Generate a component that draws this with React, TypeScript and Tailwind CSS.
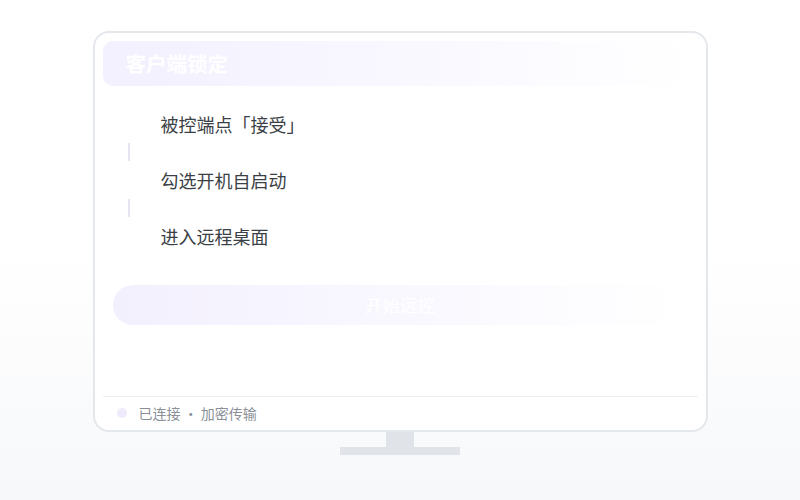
import React from 'react';

const steps = ["被控端点「接受」", "勾选开机自启动", "进入远程桌面"];

export default function App() {
  return (
    <div
      className="w-[800px] h-[500px] bg-gradient-to-b from-white from-50% to-[#f7f8fa] flex flex-col items-center pt-[31px]"
      style={{ fontFamily: '"Noto Sans CJK SC", "Noto Sans", sans-serif' }}
    >
      {/* monitor */}
      <div className="w-[615px] h-[401px] rounded-[16px] border-2 border-[#e4e7eb] bg-white flex flex-col">
        {/* header */}
        <div className="mx-[8px] mt-[8px] h-[45px] rounded-[10px] bg-gradient-to-r from-[#f3f0ff] to-white flex items-center justify-between pl-[23px] pr-[30px]">
          <span className="text-[20.5px] font-bold text-white leading-none">客户端锁定</span>
          <span className="text-[14px] text-white leading-none">已锁定</span>
        </div>

        {/* steps */}
        <div className="mt-[20px] flex flex-col">
          {steps.map((s, i) => (
            <React.Fragment key={s}>
              {i > 0 && (
                <div className="h-[20px] pl-[33px] py-[1px]">
                  <div className="w-[2px] h-full bg-[#e6e4f0]" />
                </div>
              )}
              <div className="h-[36px] flex items-center">
                <div className="w-[24px] h-[24px] ml-[22px] rounded-full bg-white" />
                <span className="ml-[20px] text-[18px] text-[#3b3f46] leading-none">{s}</span>
              </div>
            </React.Fragment>
          ))}
        </div>

        {/* button */}
        <div className="mt-[31px] mx-[18px] h-[40px] rounded-full bg-gradient-to-r from-[#f3f0fe] to-white flex items-center justify-center">
          <span className="text-[17.5px] text-white">开始远控</span>
        </div>

        {/* footer */}
        <div className="mt-auto mb-[1px] mx-[8px] border-t border-[#eceef1] h-[33px] flex items-center pl-[14px]">
          <div className="w-[10px] h-[10px] rounded-full bg-[#efebfd]" />
          <span className="ml-[12px] text-[14px] text-[#8a8f98]">已连接 · 加密传输</span>
        </div>
      </div>

      {/* stand */}
      <div className="w-[28px] h-[15px] bg-[#e0e3e7]" />
      <div className="w-[120px] h-[8px] bg-[#e0e3e7]" />
    </div>
  );
}
